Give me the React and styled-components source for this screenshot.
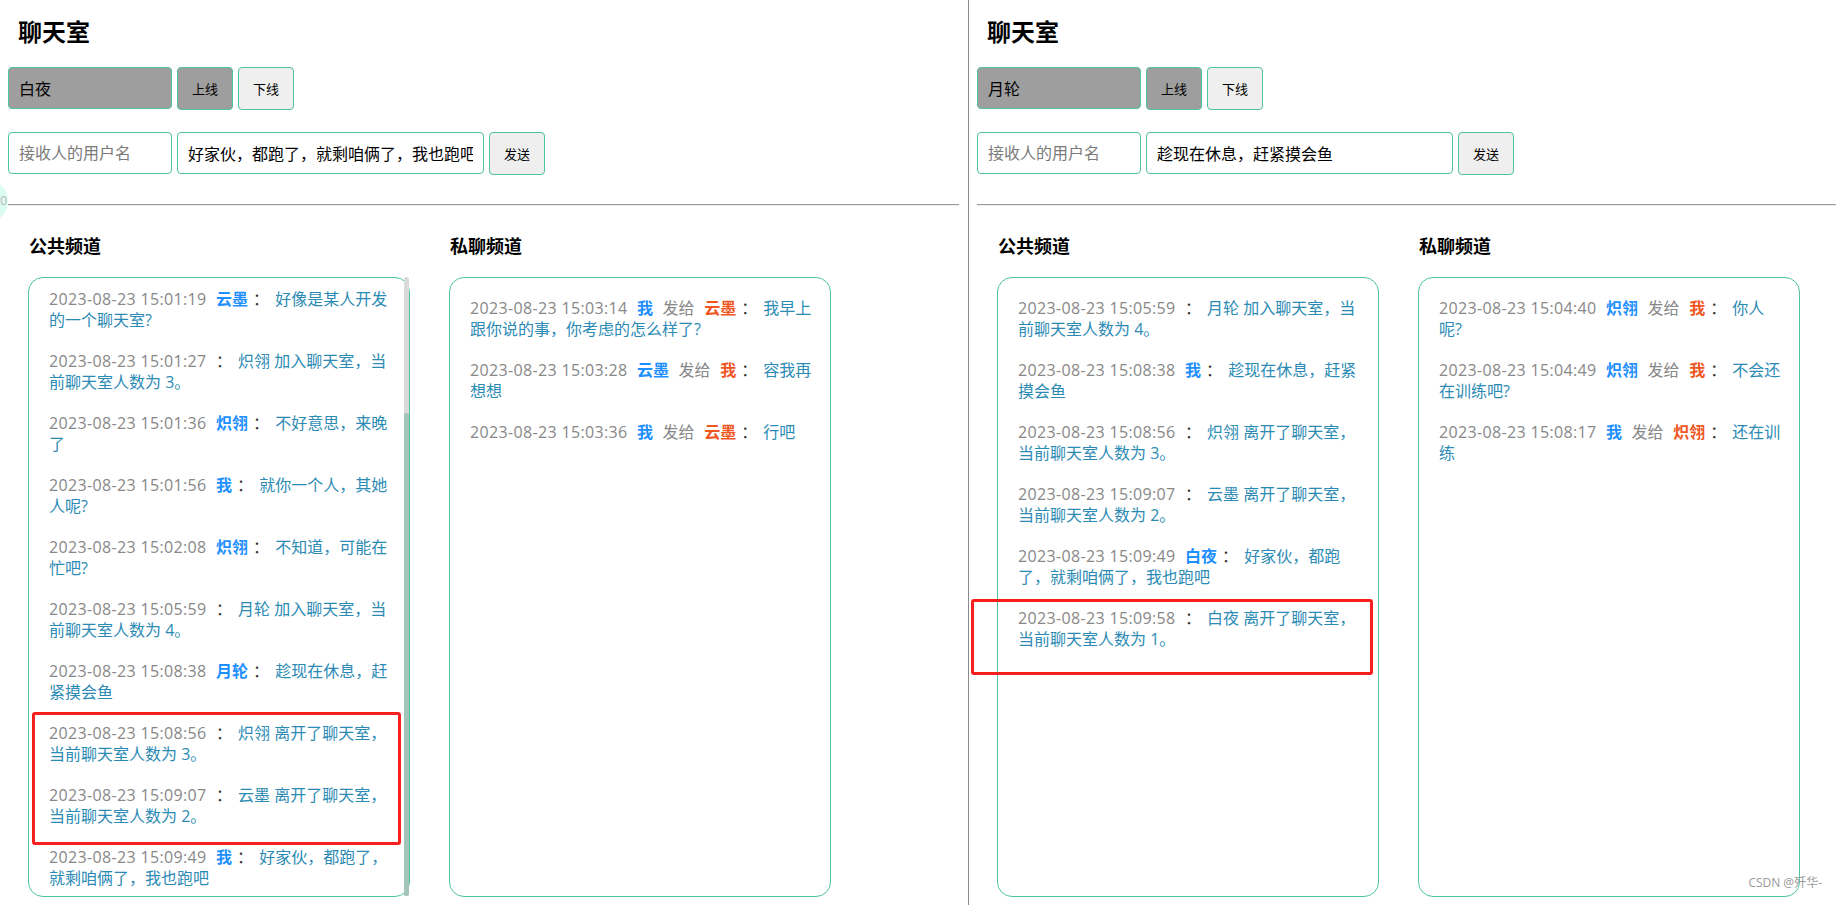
import React from "react";
import styled, { createGlobalStyle } from "styled-components";

const Global = createGlobalStyle`
  html, body { margin: 0; padding: 0; background: #fff; }
  body {
    font-family: "Open Sans", "Noto Sans CJK SC", sans-serif;
    color: #000;
  }
  * { box-sizing: border-box; }
`;

const Page = styled.div`
  position: relative;
  display: flex;
  width: 1836px;
  height: 905px;
  overflow: hidden;
`;

const Panel = styled.section`
  flex: 0 0 ${(p) => (p.$divider ? 969 : 968)}px;
  padding: 0 ${(p) => (p.$divider ? 9 : 8)}px 0 8px;
  border-right: ${(p) => (p.$divider ? "1px solid #8c8c8c" : "none")};
`;

const Title = styled.h1`
  margin: 17px 0 0 10px;
  font-size: 24px;
  line-height: 30px;
  font-weight: bold;
`;

const Row = styled.div`
  display: flex;
  align-items: flex-start;
  gap: 5px;
  margin-top: ${(p) => p.$top}px;
`;

const Field = styled.input`
  width: ${(p) => p.$w}px;
  height: 42px;
  padding: 0 10px;
  border: 1px solid #4cc3a1;
  border-radius: 4px;
  background: ${(p) => (p.$filled ? "#9e9e9e" : "#fff")};
  font-family: "Open Sans", "Noto Sans CJK SC", sans-serif;
  font-size: 16px;
  color: #000;
  outline: none;
  &::placeholder { color: #7a7a7a; }
`;

const Button = styled.button`
  width: 56px;
  height: 43px;
  padding: 0;
  border: 1px solid #4cc3a1;
  border-radius: 4px;
  background: ${(p) => (p.$active ? "#9e9e9e" : "#efefef")};
  font-family: "Open Sans", "Noto Sans CJK SC", sans-serif;
  font-size: 13px;
  color: #000;
`;

const Rule = styled.hr`
  margin: 29px 0 0;
  height: 0;
  border: 0;
  border-top: 1px solid #9a9a9a;
  border-bottom: 1px solid #ececec;
`;

const Channels = styled.div`
  display: flex;
  gap: 39px;
  margin: 28px 0 0 20px;
`;

const Column = styled.div`
  width: 382px;
  flex-shrink: 0;
`;

const ChannelTitle = styled.h2`
  margin: 0 0 19px 1px;
  font-size: 18px;
  line-height: 24px;
  font-weight: bold;
`;

const Frame = styled.div`
  position: relative;
  width: 382px;
  height: 620px;
`;

const Box = styled.div`
  width: 100%;
  height: 100%;
  border: 1px solid #4cc3a1;
  border-radius: 15px;
  display: flex;
  flex-direction: column;
  justify-content: ${(p) => (p.$scroll ? "flex-end" : "flex-start")};
  overflow: hidden;
`;

const Track = styled.div`
  position: absolute;
  top: 0;
  right: 1px;
  bottom: 1px;
  width: 5px;
  border-radius: 3px 3px 2px 2px;
  background: #dadada;
`;

const Thumb = styled.div`
  position: absolute;
  left: 0;
  right: 0;
  bottom: 0;
  border-radius: 2px;
  background: #a3c5b9;
`;

const List = styled.ul`
  list-style: none;
  margin: 0;
  padding: ${(p) => (p.$scroll ? "0 0 7px 20px" : "20px 0 7px 20px")};
  display: flex;
  flex-direction: column;
  gap: 20px;
  flex-shrink: 0;
`;

const Item = styled.li`
  width: 348px;
  font-size: 16px;
  line-height: 21px;
`;

const Time = styled.span`
  margin-right: 9.5px;
  white-space: nowrap;
  letter-spacing: 0.35px;
  color: #888;
`;

const Name = styled.span`
  font-weight: bold;
  color: ${(p) => (p.$to ? "#f0561f" : "#1e8fff")};
  margin-right: ${(p) => (p.$wide ? 9.5 : 5)}px;
`;

const Verb = styled.span`
  color: #888;
  margin-right: 9.5px;
`;

const Colon = styled.span`
  color: #333;
  margin-right: 6px;
`;

const Text = styled.span`
  color: #2c8bb4;
`;

const Highlight = styled.div`
  position: absolute;
  left: ${(p) => p.$x}px;
  top: ${(p) => p.$y}px;
  width: ${(p) => p.$w}px;
  height: ${(p) => p.$h}px;
  border: 3px solid #fb1e1e;
  border-radius: 3px;
  pointer-events: none;
`;

const Bubble = styled.div`
  position: absolute;
  left: -36px;
  top: 179px;
  width: 44px;
  height: 44px;
  border-radius: 50%;
  background: #dbfcf0;
  color: #b8b8b8;
  font-size: 12px;
  line-height: 44px;
  text-align: right;
  padding-right: 1px;
`;

const Watermark = styled.div`
  position: absolute;
  right: 14px;
  bottom: 15px;
  font-size: 12px;
  line-height: 14px;
  color: #9a9a9a;
`;

function PublicItem({ m }) {
  return (
    <Item>
      <Time>{m.t}</Time>
      {m.name && <Name>{m.name}</Name>}
      <Colon>：</Colon>
      <Text>{m.text}</Text>
    </Item>
  );
}

function PrivateItem({ m }) {
  return (
    <Item>
      <Time>{m.t}</Time>
      <Name $wide>{m.from}</Name>
      <Verb>发给</Verb>
      <Name $to>{m.to}</Name>
      <Colon>：</Colon>
      <Text>{m.text}</Text>
    </Item>
  );
}

const rooms = [
  {
    user: "白夜",
    draft: "好家伙，都跑了，就剩咱俩了，我也跑吧",
    scroll: true,
    pub: [
      { t: "2023-08-23 15:01:19", name: "云墨", text: "好像是某人开发的一个聊天室?" },
      { t: "2023-08-23 15:01:27", text: "炽翎 加入聊天室，当前聊天室人数为 3。" },
      { t: "2023-08-23 15:01:36", name: "炽翎", text: "不好意思，来晚了" },
      { t: "2023-08-23 15:01:56", name: "我", text: "就你一个人，其她人呢?" },
      { t: "2023-08-23 15:02:08", name: "炽翎", text: "不知道，可能在忙吧?" },
      { t: "2023-08-23 15:05:59", text: "月轮 加入聊天室，当前聊天室人数为 4。" },
      { t: "2023-08-23 15:08:38", name: "月轮", text: "趁现在休息，赶紧摸会鱼" },
      { t: "2023-08-23 15:08:56", text: "炽翎 离开了聊天室，当前聊天室人数为 3。" },
      { t: "2023-08-23 15:09:07", text: "云墨 离开了聊天室，当前聊天室人数为 2。" },
      { t: "2023-08-23 15:09:49", name: "我", text: "好家伙，都跑了，就剩咱俩了，我也跑吧" },
    ],
    priv: [
      { t: "2023-08-23 15:03:14", from: "我", to: "云墨", text: "我早上跟你说的事，你考虑的怎么样了?" },
      { t: "2023-08-23 15:03:28", from: "云墨", to: "我", text: "容我再想想" },
      { t: "2023-08-23 15:03:36", from: "我", to: "云墨", text: "行吧" },
    ],
  },
  {
    user: "月轮",
    draft: "趁现在休息，赶紧摸会鱼",
    scroll: false,
    pub: [
      { t: "2023-08-23 15:05:59", text: "月轮 加入聊天室，当前聊天室人数为 4。" },
      { t: "2023-08-23 15:08:38", name: "我", text: "趁现在休息，赶紧摸会鱼" },
      { t: "2023-08-23 15:08:56", text: "炽翎 离开了聊天室，当前聊天室人数为 3。" },
      { t: "2023-08-23 15:09:07", text: "云墨 离开了聊天室，当前聊天室人数为 2。" },
      { t: "2023-08-23 15:09:49", name: "白夜", text: "好家伙，都跑了，就剩咱俩了，我也跑吧" },
      { t: "2023-08-23 15:09:58", text: "白夜 离开了聊天室，当前聊天室人数为 1。" },
    ],
    priv: [
      { t: "2023-08-23 15:04:40", from: "炽翎", to: "我", text: "你人呢?" },
      { t: "2023-08-23 15:04:49", from: "炽翎", to: "我", text: "不会还在训练吧?" },
      { t: "2023-08-23 15:08:17", from: "我", to: "炽翎", text: "还在训练" },
    ],
  },
];

function Room({ room, divider }) {
  return (
    <Panel $divider={divider}>
      <Title>聊天室</Title>
      <Row $top={20}>
        <Field $w={164} $filled defaultValue={room.user} />
        <Button $active>上线</Button>
        <Button>下线</Button>
      </Row>
      <Row $top={22}>
        <Field $w={164} placeholder="接收人的用户名" />
        <Field $w={307} defaultValue={room.draft} />
        <Button>发送</Button>
      </Row>
      <Rule />
      <Channels>
        <Column>
          <ChannelTitle>公共频道</ChannelTitle>
          <Frame>
            <Box $scroll={room.scroll}>
              <List $scroll={room.scroll}>
                {room.pub.map((m, i) => (
                  <PublicItem key={i} m={m} />
                ))}
              </List>
            </Box>
            {room.scroll && (
              <Track>
                <Thumb style={{ top: 136 }} />
              </Track>
            )}
          </Frame>
        </Column>
        <Column>
          <ChannelTitle>私聊频道</ChannelTitle>
          <Frame>
            <Box>
              <List>
                {room.priv.map((m, i) => (
                  <PrivateItem key={i} m={m} />
                ))}
              </List>
            </Box>
          </Frame>
        </Column>
      </Channels>
    </Panel>
  );
}

export default function App() {
  return (
    <>
      <Global />
      <Page>
        <Room room={rooms[0]} divider />
        <Room room={rooms[1]} />
        <Bubble>0</Bubble>
        <Highlight $x={32} $y={712} $w={369} $h={133} />
        <Highlight $x={971} $y={599} $w={402} $h={76} />
        <Watermark>CSDN @歼华-</Watermark>
      </Page>
    </>
  );
}
